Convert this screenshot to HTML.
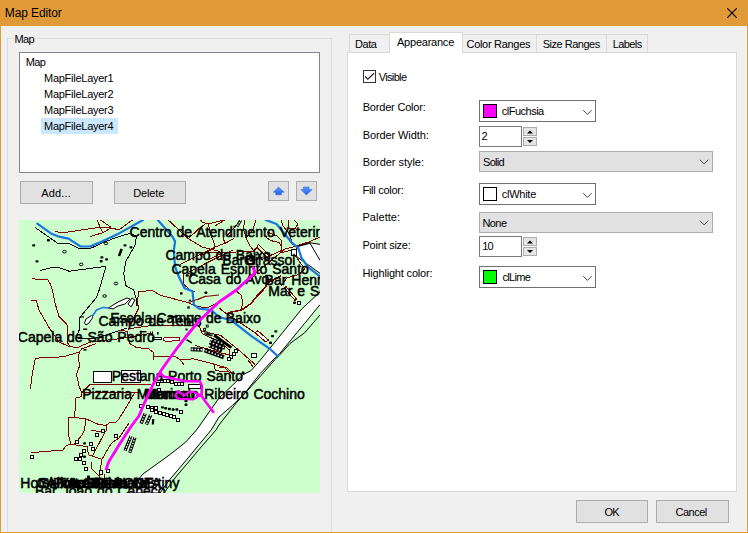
<!DOCTYPE html>
<html><head><meta charset="utf-8"><title>Map Editor</title>
<style>
*{box-sizing:border-box;margin:0;padding:0}
html,body{width:748px;height:533px;overflow:hidden;background:#f0f0f0}
body{position:relative;font-family:"Liberation Sans",sans-serif;font-size:11px;color:#000}
.abs{position:absolute}
#win{position:absolute;left:0;top:0;width:748px;height:533px;border:1px solid #e19a38;background:#f0f0f0}
#title{position:absolute;left:0;top:0;width:748px;height:26px;background:#e19a38}
.lbl{position:absolute;white-space:nowrap;line-height:13px;font-size:11px}
.btn{position:absolute;border:1px solid #adadad;background:#e1e1e1}
.grp{position:absolute;border:1px solid #dcdcdc}
.list{position:absolute;border:1px solid #828790;background:#fff}
.tab{position:absolute;border:1px solid #d9d9d9;border-bottom:none;background:#f0f0f0}
.combo{position:absolute;border:1px solid #707070;background:#fff}
.combo2{position:absolute;border:1px solid #adadad;background:#e1e1e1}
.edit{position:absolute;border:1px solid #7a7a7a;background:#fff}
.sw{position:absolute;border:1px solid #000;width:14px;height:14px}
.spin{position:absolute;border:1px solid #adadad;background:#e5e5e5;width:14px}
</style></head><body>
<div id="win"></div>
<div id="title">
<svg class="abs" style="left:727px;top:8px" width="10" height="10" viewBox="0 0 10 10"><path d="M0.2 0.2L9.8 9.8M9.8 0.2L0.2 9.8" stroke="#000" stroke-width="1.1" fill="none"/></svg>
</div>

<!-- left group -->
<div class="grp" style="left:7px;top:38px;width:325px;height:520px"></div>
<div class="list" style="left:19px;top:52px;width:301px;height:121px"></div>
<div class="abs" style="left:41px;top:118px;width:77px;height:16px;background:#cce8ff"></div>

<div class="btn" style="left:20px;top:181px;width:73px;height:23px"></div>
<div class="btn" style="left:114px;top:181px;width:72px;height:23px"></div>
<div class="btn" style="left:268px;top:181px;width:21px;height:20px"></div>
<div class="btn" style="left:296px;top:181px;width:21px;height:20px"></div>
<svg class="abs" style="left:268px;top:181px" width="49" height="20" viewBox="0 0 49 20">
<defs><linearGradient id="gb" x1="0" y1="0" x2="0" y2="1"><stop offset="0" stop-color="#5a9bff"/><stop offset="1" stop-color="#1f5fe0"/></linearGradient></defs>
<path d="M10.6 6 L16.2 11.2 L13.4 11.2 L13.4 13.8 L7.8 13.8 L7.8 11.2 L5.2 11.2 Z" fill="url(#gb)" stroke="#2a62d8" stroke-width="0.5"/>
<path d="M35.4 6 L41 6 L41 8.5 L44.2 8.5 L38.3 14 L32.9 8.5 L35.4 8.5 Z" fill="url(#gb)" stroke="#2a62d8" stroke-width="0.5"/>
</svg>

<svg class="abs" style="left:19px;top:220px" width="301" height="273" viewBox="0 0 301 273" font-family="'Liberation Sans',sans-serif" font-size="14">
<rect x="0" y="0" width="301" height="273" fill="#ccffcc"/>
<!-- white areas -->
<g fill="#fff" stroke="#000" stroke-width="1" stroke-linejoin="round">
<path d="M301 72 L283 88.7 L241.4 140 L232 150.7 L224 154.7 L213.4 165.4 L200 178 L177.5 210 L166.8 222 L150.8 234.7 L124 254 L108 273 L141 273 L150.8 259.5 L166.8 240.7 L178.9 226 L192.2 210 L200 197 L213.4 185.5 L226.7 172 L241.4 153.4 L254 140 L260.2 134.2 L285.6 103.4 L301 84.7"/>
<path d="M278 26 L290.7 22.7 L302 24.5 L302 54 L276.3 35.6 Z"/>
<path d="M290.7 22.7 L301 40.3" fill="none"/>
<path d="M278.5 26.2 L290.7 22.9" fill="none" stroke-width="1.8"/>
</g>
<path d="M301 95 L285.6 112.8 L271 123.5 L260.2 135.5 L255.5 140 L242.8 154.7 L217.4 182.8 L200 205 L197 210 L183 226 L156 258 L145 273" fill="none" stroke="#000" stroke-width="1"/>

<!-- black outlines -->
<g fill="none" stroke="#000" stroke-width="1" stroke-linejoin="round" shape-rendering="crispEdges">
<path d="M16 7.4 L38.8 23.4 L50.1 23.7 L60.8 28.7 L70.9 28.7 L85.6 22 L100 16.5 L110.7 13.4 L117.4 16 L116 25.4 L106.7 41.4 L104.7 53.5 L106.7 65.5 L114.7 70 L117 78 L118 86"/>
<path d="M21.4 50.4 L34.8 47.2 L39.4 47.5 L50.1 51.2 L85.6 46.5 L86.9 46.8 L80.2 70 L77.5 77.4 L61.5 96.7 L60.2 98.7 L60.2 110 L57.5 116.8 L60.2 118.8 L74.9 118.8 L100 110.8 L108 108"/>
</g>
<!-- white blobs -->
<g fill="#fff" stroke="#000" stroke-width="1">
<path d="M65.5 103 L67 99 L72.5 95.5 L74 97 L70 103 L67 105 Z"/>
<path d="M89.6 88 L94 85 L100 81.5 L108 78 L111 79 L106 84 L99 86 L94 89 Z"/>
<path d="M109 84 L113 78 L116 80 L112 87 Z"/>
<rect x="74.5" y="151.5" width="18" height="11"/>
<rect x="102.5" y="150.5" width="19" height="12"/>
<rect x="133.5" y="117.5" width="9" height="2"/>
<rect x="169.5" y="164.5" width="12" height="4"/>
<rect x="233.5" y="133.5" width="4" height="3"/>
</g>
<!-- brown roads -->
<g fill="none" stroke="#800000" stroke-width="1" stroke-linejoin="round" shape-rendering="crispEdges">
<path d="M36 11.6 L44 12.7 L80.2 7.4 L92.2 8 L100 9.8 L113.4 0"/>
<path d="M70.9 16.7 L83.6 12.7 L92.2 8"/>
<path d="M78.2 0 L80.9 6.7 L83.6 12.7"/>
<path d="M81.6 0 L92.2 7.4"/>
<path d="M13 58.4 L20 59.8 L28.7 59.5 L31.4 64.2 L33.4 70 L36.1 83.4 L40.1 96.7 L48.1 104.8 L48.1 122.1 L51.5 126.8 L58.8 127.5 L70.9 122.1 L100 118.8 L118 116 L133 113"/>
<path d="M12 80 L17.4 80.7 L20 90 L30.7 108.8 L40.1 122.1 L51.5 127"/>
<path d="M16 140 L16.7 138.2 L44.1 136.8 L60.2 132.2 L62.8 128.8 L77.5 123.5"/>
<path d="M60.2 132.2 L59.5 140 L60.8 145.3 L57.5 154.7 L60.2 166.7 L62.8 172.8 L62.2 176.8 L56.8 178.1 L56.8 184.1 L55.2 197.5"/>
<path d="M16 140 L13.4 153.4 L11.4 168.7"/>
<path d="M62.8 172.8 L70.9 164.7 L132 164.7"/>
<path d="M64 172.1 L121.4 172.1"/>
<path d="M49.5 210 L49.5 197.5 L55.2 197.5 L66.8 198.8 L78.9 204.2 L86.9 205.5 L90.9 202.2 L96.3 202.8 L100 198.8 L108 186 L116 172"/>
<path d="M66.8 198.8 L65.5 210 L62.8 215.3 L54.8 224.7 L52.1 224"/>
<path d="M86.9 205.5 L87.6 210 L85.6 212.7 L73.5 236"/>
<path d="M49.5 210 L50.1 218 L52.1 224 L46.8 226 L44.1 230 L12 232.7"/>
<path d="M54.8 224.7 L68.2 226.7 L69.5 234.7 L82.9 239.4 L80.2 256.8 L80.9 267.5"/>
<path d="M72.2 210 L85.6 212.7"/>
<path d="M110 203 L100 218 L92.2 223.4 L82.9 239.4"/>
<path d="M72.2 242 L72.9 248.8 L80.2 256"/>
<path d="M85.6 254 L84.9 268"/>
<path d="M120 71.3 L133.4 70.7 L141.4 75.3 L169.5 82.7 L176.2 86 L188.2 88 L200 82"/>
<path d="M120 71.3 L118 83.4 L120 87.4 L117.4 92.7 L110.7 106.1 L109.4 110.1"/>
<path d="M109.4 108.8 L133.4 105.4 L174.9 105.4 L180.2 106.1 L182.9 111.4 L184 111.6"/>
<path d="M100 110 L108 111.4 L110.7 123.5 L117.4 127.5 L129.4 128.8 L134.8 132.8 L134.8 140"/>
<path d="M134.8 136.2 L156.1 136.2 L161.5 140 L165 145"/>
<path d="M144.5 119 Q144.5 117.5 147 117.5 L160 117.5 Q162 119 160 120.5 L147 121.5 Q144.5 121 144.5 119" fill="#fff"/>
<path d="M149.2 0 L169.4 18.7 L183.4 27.1 L201 31.5"/>
<path d="M160.8 44.8 L195.6 27.1"/>
<path d="M169.4 18.7 L179.6 8.9 L186 4"/>
<path d="M169.5 52.1 L200 36.8 L214 30"/>
<path d="M164.8 53.5 L164.8 64.2 L170.9 70 L176 72"/>
<path d="M181.5 0 L183.4 2.3 L189 3.7 L195.5 2.5 L204 0"/>
<path d="M189.5 3.7 L190.9 12.2 L195.5 24.3 L195.5 28"/>
</g>


<g fill="none" stroke="#800000" stroke-width="1" stroke-linejoin="round" shape-rendering="crispEdges">
<path d="M196.5 5.6 L205.9 0"/>
<path d="M225.5 0 L224.6 9.4 L227.4 18.7 L231.2 26.2 L234.9 30.9"/>
<path d="M236.8 0 L234 9.4 L227.4 17.3"/>
<path d="M217.1 5.6 L207.8 15.9"/>
<path d="M195.5 28 L190 30.9 L181.5 36"/>
<path d="M195.6 27.1 L205.9 23.4 L215.3 18.2"/>
<path d="M204 17.3 L205.9 23.4"/>
<path d="M176 32.5 L234.9 31.8 L239.6 24.3 L249.9 35.5"/>
<path d="M237.7 27.1 L248 37.4"/>
<path d="M246.1 16.4 L251.7 20.6 L260 22.5 L263 27 L262 33 L272 30"/>
<path d="M190 39.3 L202.2 33.7"/>
<path d="M248 37 L266 29 L274.2 26.9 L290.7 21.7 L301 17"/>
<path d="M273.2 25.3 L271.2 15 L264 6 L262 0"/>
<path d="M276.3 35.6 L285.6 49 L280.4 54.2 L268 58 L262 66"/>
<path d="M266 29 L248 44 L238 52 L232 60"/>
<path d="M270 0 L269 8 L276 9 L279 4 L275 0"/>
<path d="M248 12 L258 16 L262 20 L262 27"/>
<path d="M209.4 92.7 L222.7 90 L232.1 83.4 L238 76 L244.1 70 L250 62 L262 56" stroke-width="1.6"/>
<path d="M200 88 L208 94 L236.1 112.8"/>
<path d="M216 70 L222 75 L224 82 L222 90"/>
<path d="M236.1 112.8 L238.8 110.8 L249.5 120.1 L246.8 122.1 Z" fill="#fff"/>
<path d="M265.5 68 L267 66.5 L277.5 79 L276 80.5 Z" fill="#fff"/>
<path d="M229 140 L232 144 L234 147"/>
<path d="M200 147 L206 148 L210 152 L212 158"/>
</g>
<g fill="none" stroke="#800000" stroke-width="1" stroke-linejoin="round" shape-rendering="crispEdges">
<path d="M181.3 110 L184 114.3 L196.3 119.6 L203.8 123.9 L210.7 130.3 L210.7 134.6 L201.6 133"/>
<path d="M184 111.6 L201.6 115.3 L218.8 129.3 L235.9 144.2"/>
<path d="M161 139.4 L174.9 138.9 L195.2 144.2 L208 148 L212.3 152.2 L196.3 150.6 L195.2 144.2"/>
<path d="M176 125.5 L185.6 128.2 L208 134.6"/>
</g>
<!-- blue rivers -->
<g fill="none" stroke="#1874e0" stroke-width="2.2" stroke-linejoin="round" stroke-linecap="round">
<path d="M18.3 3.7 L32 13.4 L40 16.7 L49.5 18.7 L61.5 26.5 L70.9 26.5 L82.9 21.4 L100 13.4 L124 0"/>
<path d="M138.8 0 L153.5 16.7 L156.1 21.4 L154.8 30.7 L156.1 46.8 L160.2 57.5 L165.5 68.2 L173.5 71.3 L174.9 84.7 L180.2 88.7 L192.2 90 L200 97 L212 100.1 L233.4 116.8 L250.8 128.8 L258.8 136.2"/>
<path d="M246.8 0 L257.5 4 L264.3 12.2 L272.7 22.5 L279.3 28.1 L282.5 38 L289.6 47.7 L301 56.5"/>
<path d="M73.5 96 L77.5 90 L84.2 87.4 L89.6 88" stroke-width="1.5"/>
</g>


<g fill="#fff" stroke="#000" stroke-width="1" shape-rendering="crispEdges">
<rect x="137.7" y="162.9" width="3" height="3"/>
<rect x="138.2" y="168.3" width="3" height="3"/>
<rect x="141.9" y="159.7" width="3" height="3"/>
<rect x="144.5" y="159.0" width="3" height="3"/>
<rect x="147.3" y="159.2" width="3" height="3"/>
<rect x="151.6" y="160.8" width="3" height="3"/>
<rect x="155.8" y="162.2" width="3" height="3"/>
<rect x="158.5" y="162.2" width="3" height="3"/>
<rect x="161.2" y="162.2" width="3" height="3"/>
<rect x="120.0" y="184.9" width="3" height="3"/>
<rect x="127.5" y="185.4" width="3" height="3"/>
<rect x="131.2" y="186.5" width="3" height="3"/>
<rect x="135.5" y="186.5" width="3" height="3"/>
<rect x="160.6" y="190.2" width="3" height="3"/>
<rect x="157.4" y="198.2" width="3" height="3"/>
<rect x="131.2" y="188.6" width="3" height="3"/>
<rect x="135.5" y="190.7" width="3" height="3"/>
<rect x="139.3" y="191.8" width="3" height="3"/>
<rect x="143.0" y="192.4" width="3" height="3"/>
<rect x="146.7" y="193.4" width="3" height="3"/>
<rect x="150.0" y="194.5" width="3" height="3"/>
<rect x="153.4" y="195.2" width="3" height="3"/>
<rect x="56.7" y="220.5" width="3" height="3"/>
<rect x="70.0" y="222.3" width="3" height="3"/>
<rect x="72.7" y="227.2" width="3" height="3"/>
<rect x="63.3" y="229.9" width="3" height="3"/>
<rect x="60.0" y="233.2" width="3" height="3"/>
<rect x="55.3" y="237.2" width="3" height="3"/>
<rect x="59.3" y="237.9" width="3" height="3"/>
<rect x="63.6" y="241.9" width="3" height="3"/>
<rect x="65.3" y="247.3" width="3" height="3"/>
<rect x="87.4" y="249.9" width="3" height="3"/>
<rect x="76.7" y="213.2" width="3" height="3"/>
<rect x="82.1" y="209.8" width="3" height="3"/>
<rect x="95.4" y="214.5" width="3" height="3"/>
<rect x="11.2" y="235.5" width="3" height="3"/>
<rect x="278.7" y="81.5" width="3" height="3"/>
<rect x="215.1" y="129.9" width="3" height="3"/>
<rect x="213.0" y="132.5" width="3" height="3"/>
<rect x="210.5" y="135.0" width="3" height="3"/>
<rect x="208.2" y="137.4" width="3" height="3"/>
<rect x="232.5" y="133.5" width="4.5" height="3.5"/>
<rect x="272.5" y="29.5" width="5" height="5.5"/>
<rect x="80.5" y="250.5" width="3" height="4"/>
</g>
<g fill="#000">
<rect x="141.9" y="186.2" width="3" height="2.4" rx="0.8"/>
<rect x="145.1" y="187.1" width="3" height="2.4" rx="0.8"/>
<rect x="148.9" y="187.8" width="3" height="2.4" rx="0.8"/>
<rect x="152.6" y="188.3" width="3" height="2.4" rx="0.8"/>
<rect x="156.4" y="188.3" width="3" height="2.4" rx="0.8"/>
<rect x="165.5" y="179.8" width="3" height="2.4" rx="0.8"/>
<rect x="165.5" y="183.6" width="3" height="2.4" rx="0.8"/>
<rect x="64.0" y="222.2" width="3" height="2.4" rx="0.8"/>
<rect x="64.0" y="235.5" width="3" height="2.4" rx="0.8"/>
<rect x="68.0" y="255.6" width="3" height="2.4" rx="0.8"/>
<rect x="13.2" y="24.2" width="3" height="2.4" rx="0.8"/>
<rect x="27.9" y="19.1" width="3" height="2.4" rx="0.8"/>
<rect x="16.5" y="40.2" width="3" height="2.4" rx="0.8"/>
<rect x="81.4" y="36.2" width="3" height="2.4" rx="0.8"/>
<rect x="86.1" y="38.2" width="3" height="2.4" rx="0.8"/>
<rect x="80.7" y="40.0" width="3" height="2.4" rx="0.8"/>
<rect x="104.5" y="24.2" width="3" height="2.4" rx="0.8"/>
<rect x="110.5" y="26.2" width="3" height="2.4" rx="0.8"/>
<rect x="166.7" y="54.3" width="3" height="2.4" rx="0.8"/>
<rect x="274.0" y="81.5" width="3" height="2.4" rx="0.8"/>
<rect x="255.3" y="110.2" width="3" height="2.4" rx="0.8"/>
<rect x="252.0" y="114.9" width="3" height="2.4" rx="0.8"/>
<rect x="250.0" y="121.6" width="3" height="2.4" rx="0.8"/>
<rect x="222.6" y="151.6" width="3" height="2.4" rx="0.8"/>
<ellipse cx="45.5" cy="31.7" rx="1.8" ry="1.3" fill="#ccffcc" stroke="#000" stroke-width="1"/>
<ellipse cx="62.2" cy="44.4" rx="1.8" ry="1.3" fill="#ccffcc" stroke="#000" stroke-width="1"/>
<ellipse cx="87.0" cy="23.4" rx="1.8" ry="1.3" fill="#ccffcc" stroke="#000" stroke-width="1"/>
<ellipse cx="96.9" cy="63.5" rx="1.8" ry="1.3" fill="#ccffcc" stroke="#000" stroke-width="1"/>
<ellipse cx="85.6" cy="76.0" rx="1.8" ry="1.3" fill="#ccffcc" stroke="#000" stroke-width="1"/>
</g>
<g fill="none" stroke-linecap="butt">
<path d="M171.7 129.3 L183.5 129.8" stroke="#000" stroke-width="4"/>
<path d="M171.7 129.3 L183.5 129.8" stroke="#fff" stroke-width="1.6" stroke-dasharray="1.6 1.4" stroke-dashoffset="-0.8"/>
<path d="M185.6 130.3 L204.9 137.3" stroke="#000" stroke-width="4.2"/>
<path d="M185.6 130.3 L204.9 137.3" stroke="#fff" stroke-width="1.5" stroke-dasharray="1.4 1.8" stroke-dashoffset="-1"/>
<path d="M195.2 115.3 L212.3 127.6" stroke="#000" stroke-width="3"/>
<path d="M186.7 114.3 L192 114.6" stroke="#000" stroke-width="2.4"/>
<path d="M190.5 122 L206 128 M190 125.5 L203 131 M192 119.5 L205 124" stroke="#000" stroke-width="3.6"/>
<path d="M190.5 122 L206 128 M190 125.5 L203 131 M192 119.5 L205 124" stroke="#fff" stroke-width="1.4" stroke-dasharray="1.5 2"/>
<path d="M126.3 193.3 L122 203.5 M131.7 194.9 L127.4 204.5" stroke="#000" stroke-width="3.4"/>
<path d="M126.3 193.3 L122 203.5 M131.7 194.9 L127.4 204.5" stroke="#fff" stroke-width="1.4" stroke-dasharray="1.5 1.3"/>
<path d="M134.3 199.2 L133.8 204.5" stroke="#000" stroke-width="2.2"/>
<path d="M112 216 L106 230.7 M116 217.4 L110.7 232.7" stroke="#000" stroke-width="3.2"/>
<path d="M112 216 L106 230.7 M116 217.4 L110.7 232.7" stroke="#fff" stroke-width="1.3" stroke-dasharray="1.5 1.3"/>
<path d="M102.7 29 L100 36" stroke="#000" stroke-width="2.5"/>
<path d="M167.4 119.6 L172.8 122.8" stroke="#000" stroke-width="1.5"/>
<path d="M227.5 36.5 L231 35 L235 36.5 L236 41 L235 44.5 L229.5 45 L227 42 Z" fill="#000" stroke="#000" stroke-width="1"/>
<path d="M229.5 40 L233 38.5 L234.5 41 L232 43.5 L229.5 42.5 Z" fill="#fff"/><path d="M228 37.5 L230 37 L229.5 38.5 Z M234 43 L235 42 L235 44 Z" fill="#fff"/>
<path d="M221.8 0 L218 6.5" stroke="#000" stroke-width="3"/>
<path d="M221.8 0 L218 6.5" stroke="#fff" stroke-width="1.2" stroke-dasharray="1.5 1"/>
</g>
<g fill="#000">
<rect x="161" y="72.3" width="2.6" height="2.2"/><rect x="185.4" y="71.5" width="3" height="2.4" rx="0.8"/><rect x="168.3" y="86.4" width="2.4" height="2.2"/><rect x="169.7" y="79.7" width="2.4" height="1.6"/>
<rect x="121.4" y="111" width="6" height="1.4"/><rect x="131" y="111.5" width="1" height="3"/><rect x="133" y="111.5" width="1" height="3"/><rect x="138" y="112" width="1.6" height="2.6"/>
<rect x="166.5" y="108.5" width="2" height="2"/>
</g>
<g fill="#ccffcc" stroke="#000" stroke-width="0.9">
<rect x="184.6" y="108.4" width="2" height="2"/><rect x="187.2" y="105.1" width="2" height="2"/><rect x="186" y="111.8" width="2" height="2"/><rect x="191" y="113.8" width="2" height="2"/>
</g>
<path d="M169.5 82.7 L186 76.5 L200 75" fill="none" stroke="#800000" stroke-width="1"/>
<path d="M178 80 L186.9 76" fill="none" stroke="#800000" stroke-width="1"/>
<g fill="#000">
<rect x="64.2" y="108.5" width="4" height="1.5"/><rect x="61" y="96.3" width="4" height="1.2"/><rect x="64.5" y="129" width="3" height="1.6"/>
</g>
<!-- labels -->
<g fill="#000" stroke="#000" stroke-width="0.5" id="labels" word-spacing="1">
<text x="110.6" y="16.8">Centro de Atendimento Veterinário</text>
<text x="146.4" y="40.1">Campo de Baixo</text>
<text x="203.3" y="45.3">BarGirassol</text>
<text x="152.4" y="53.6">Capela Espirito Santo</text>
<text x="169.2" y="64.2">Casa do Avo</text>
<text x="245.6" y="65.3">Bar Henrique</text>
<text x="249.3" y="76">Mar e Sol</text>
<text x="91.2" y="102.8" word-spacing="0.4">Escola Campo de Baixo</text>
<text x="79.5" y="106.4">Campo de Tenis</text>
<text x="-1.2" y="121.5">Capela de São Pedro</text>
<text x="92.8" y="160.7">Pestana Porto Santo</text>
<text x="63.2" y="178.6">Pizzaria Mamma</text>
<text x="179.5" y="178.6" text-anchor="end">Mercado</text>
<text x="176" y="178.6" text-anchor="end">Marisco</text>
<text x="185.2" y="178.8">Ribeiro Cochino</text>
<text x="1.3" y="268">Hotel Torre Praia</text>
<text x="17.4" y="268">CAIXA GERAL DE</text>
<text x="142" y="268" text-anchor="end">BPI PONTA</text>
<text x="21" y="268">Salinas Baiana</text>
<text x="128" y="268" text-anchor="end">Apartamento</text>
<text x="160.4" y="268" text-anchor="end">Porto Santo Destiny</text>
<text x="16" y="276">Bar João do Cabeço</text>
</g>
<!-- magenta route -->
<g fill="none" stroke="#ff00ff" stroke-width="2.9" stroke-linejoin="round" stroke-linecap="butt">
<path d="M234 46.8 L236 52.8 L217.4 70 L200 82 L180.2 100.7 L166.8 116.8 L157.5 128.8 L149.5 140 L142.4 150 L133.8 165 L125.3 183.2 L119.9 196 L112.4 206 L100 225 L89.6 242 L86.9 250"/>
<path d="M141.3 153.2 L144.5 156.4 L165.9 161.2 L180.9 161.2 L183 166 L182.5 175.7 L186 181 L194.9 192.8" stroke-width="2.6"/>
<path d="M182.5 175.7 L174.4 171.9 L170.2 171.9 L164.8 175.7 L159.5 170.9 L156.3 175.7 L159.5 178.9 L174.4 179.4 L178.7 176.2 L182.5 175.7" stroke-width="2.2"/>
</g>
</svg>


<!-- right tabs -->
<div class="abs" style="left:347px;top:52px;width:390px;height:440px;background:#fff;border:1px solid #d9d9d9"></div>
<div class="tab" style="left:349px;top:34px;width:41px;height:18px"></div>
<div class="tab" style="left:461px;top:34px;width:76px;height:18px"></div>
<div class="tab" style="left:536px;top:34px;width:71px;height:18px"></div>
<div class="tab" style="left:606px;top:34px;width:42px;height:18px"></div>
<div class="tab" style="left:389px;top:32px;width:74px;height:21px;background:#fff"></div>

<div class="abs" style="left:363px;top:70px;width:13px;height:13px;border:1px solid #333;background:#fff"></div>
<svg class="abs" style="left:363px;top:70px" width="13" height="13" viewBox="0 0 13 13"><path d="M2 6.4 L4.8 9.2 L11.1 3.2" stroke="#222" stroke-width="1.2" fill="none"/></svg>

<div class="combo" style="left:479px;top:100px;width:117px;height:22px"></div>
<div class="sw" style="left:483px;top:104px;background:#ff00ff"></div>
<div class="edit" style="left:479px;top:126px;width:43px;height:21px"></div>
<div class="spin" style="left:523px;top:127px;height:9px"></div>
<div class="spin" style="left:523px;top:137px;height:9px"></div>
<div class="combo2" style="left:479px;top:151px;width:234px;height:21px"></div>
<div class="combo" style="left:479px;top:183px;width:117px;height:22px"></div>
<div class="sw" style="left:483px;top:187px;background:#fff"></div>
<div class="combo2" style="left:479px;top:212px;width:234px;height:21px"></div>
<div class="edit" style="left:479px;top:236px;width:43px;height:21px"></div>
<div class="spin" style="left:523px;top:237px;height:9px"></div>
<div class="spin" style="left:523px;top:247px;height:9px"></div>
<div class="combo" style="left:479px;top:266px;width:117px;height:22px"></div>
<div class="sw" style="left:483px;top:270px;background:#00ff00"></div>
<svg class="abs" style="left:479px;top:100px" width="240" height="190" viewBox="0 0 240 190" fill="none" stroke="#444" stroke-width="1">
<path d="M104.2 10.2 L108.4 14.4 L112.6 10.2"/>
<path d="M104.2 93.2 L108.4 97.4 L112.6 93.2"/>
<path d="M104.2 176.2 L108.4 180.4 L112.6 176.2"/>
<path d="M220.9 59.7 L225.1 63.9 L229.3 59.7"/>
<path d="M220.9 120.7 L225.1 124.9 L229.3 120.7"/>
<g fill="#000" stroke="none">
<path d="M48 33.5 L51 30.5 L54 33.5 Z"/><path d="M48 40 L54 40 L51 43 Z"/>
<path d="M48 143.5 L51 140.5 L54 143.5 Z"/><path d="M48 150 L54 150 L51 153 Z"/>
</g>
</svg>

<div class="btn" style="left:576px;top:500px;width:72px;height:23px"></div>
<div class="btn" style="left:656px;top:500px;width:73px;height:23px"></div>
<div class="lbl" style="left:4.80px;top:6.04px;letter-spacing:-0.11px;font-size:12px;line-height:15px;">Map Editor</div>
<div class="lbl" style="left:14.50px;top:33.09px;letter-spacing:-0.70px;font-size:11px;line-height:13px;background:#f0f0f0;padding:0 2px;margin-left:-2px">Map</div>
<div class="lbl" style="left:25.75px;top:56.34px;letter-spacing:-0.70px;font-size:11px;line-height:13px;">Map</div>
<div class="lbl" style="left:44.00px;top:71.59px;letter-spacing:-0.26px;font-size:11px;line-height:13px;">MapFileLayer1</div>
<div class="lbl" style="left:44.00px;top:87.59px;letter-spacing:-0.26px;font-size:11px;line-height:13px;">MapFileLayer2</div>
<div class="lbl" style="left:44.00px;top:103.59px;letter-spacing:-0.26px;font-size:11px;line-height:13px;">MapFileLayer3</div>
<div class="lbl" style="left:44.00px;top:119.59px;letter-spacing:-0.26px;font-size:11px;line-height:13px;">MapFileLayer4</div>
<div class="lbl" style="left:41.25px;top:187.34px;letter-spacing:0.15px;font-size:11px;line-height:13px;">Add...</div>
<div class="lbl" style="left:133.25px;top:187.34px;letter-spacing:-0.16px;font-size:11px;line-height:13px;">Delete</div>
<div class="lbl" style="left:355.00px;top:37.59px;letter-spacing:-0.42px;font-size:11px;line-height:13px;">Data</div>
<div class="lbl" style="left:397.00px;top:35.59px;letter-spacing:-0.23px;font-size:11px;line-height:13px;">Appearance</div>
<div class="lbl" style="left:466.50px;top:37.59px;letter-spacing:-0.30px;font-size:11px;line-height:13px;">Color Ranges</div>
<div class="lbl" style="left:542.70px;top:37.59px;letter-spacing:-0.49px;font-size:11px;line-height:13px;">Size Ranges</div>
<div class="lbl" style="left:612.80px;top:37.59px;letter-spacing:-0.60px;font-size:11px;line-height:13px;">Labels</div>
<div class="lbl" style="left:378.75px;top:70.89px;letter-spacing:-0.66px;font-size:11px;line-height:13px;">Visible</div>
<div class="lbl" style="left:362.70px;top:101.29px;letter-spacing:-0.19px;font-size:11px;line-height:13px;">Border Color:</div>
<div class="lbl" style="left:362.70px;top:129.19px;letter-spacing:-0.10px;font-size:11px;line-height:13px;">Border Width:</div>
<div class="lbl" style="left:362.70px;top:156.19px;letter-spacing:-0.04px;font-size:11px;line-height:13px;">Border style:</div>
<div class="lbl" style="left:362.50px;top:184.34px;letter-spacing:-0.28px;font-size:11px;line-height:13px;">Fill color:</div>
<div class="lbl" style="left:362.50px;top:211.34px;letter-spacing:0.03px;font-size:11px;line-height:13px;">Palette:</div>
<div class="lbl" style="left:362.50px;top:238.84px;letter-spacing:-0.25px;font-size:11px;line-height:13px;">Point size:</div>
<div class="lbl" style="left:362.50px;top:266.84px;letter-spacing:-0.18px;font-size:11px;line-height:13px;">Highlight color:</div>
<div class="lbl" style="left:501.75px;top:104.89px;letter-spacing:-0.50px;font-size:11px;line-height:13px;">clFuchsia</div>
<div class="lbl" style="left:481.60px;top:129.89px;letter-spacing:0.00px;font-size:11px;line-height:13px;">2</div>
<div class="lbl" style="left:483.00px;top:156.34px;letter-spacing:-0.70px;font-size:11px;line-height:13px;">Solid</div>
<div class="lbl" style="left:501.75px;top:187.89px;letter-spacing:-0.26px;font-size:11px;line-height:13px;">clWhite</div>
<div class="lbl" style="left:482.50px;top:216.84px;letter-spacing:-0.60px;font-size:11px;line-height:13px;">None</div>
<div class="lbl" style="left:482.20px;top:239.89px;letter-spacing:-0.70px;font-size:11px;line-height:13px;">10</div>
<div class="lbl" style="left:502.50px;top:270.59px;letter-spacing:-0.70px;font-size:11px;line-height:13px;">clLime</div>
<div class="lbl" style="left:604.50px;top:505.99px;letter-spacing:-0.70px;font-size:11px;line-height:13px;">OK</div>
<div class="lbl" style="left:675.60px;top:505.99px;letter-spacing:-0.53px;font-size:11px;line-height:13px;">Cancel</div>
<div class="abs" style="left:0;top:0;width:748px;height:533px;border:1px solid #e19a38;pointer-events:none"></div>
</body></html>
